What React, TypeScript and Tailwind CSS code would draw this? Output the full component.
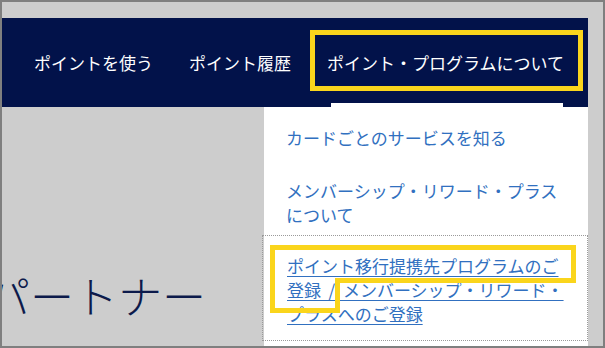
export default function App() {
  return (
    <div className="relative w-[605px] h-[348px] overflow-hidden font-['Noto_Sans_CJK_JP','Noto_Sans',sans-serif]">
      <div className="relative w-full h-full border-2 border-[#7f7f7f] bg-[#cdcdcd] overflow-hidden">
        <div className="pt-[16px] pr-[15px]">
          <nav className="h-[89px] bg-[#02124a] flex items-center pl-[32px] gap-[36px] text-[17px] leading-[24px] text-white">
            <span>ポイントを使う</span>
            <span>ポイント履歴</span>
            <span className="relative h-full flex items-center">
              ポイント・プログラムについて
              <span className="absolute left-[4px] right-[1px] bottom-0 h-[4px] bg-white" />
            </span>
          </nav>
        </div>
        <h1 className="mt-[166px] -ml-[16px] text-[44px] leading-[44px] font-light text-[#0c1a4b] whitespace-nowrap">
          パートナー
        </h1>
        <div className="absolute left-[262px] top-[105px] w-[324px] bottom-0 bg-white pt-[19px] text-[17px] leading-[24px] text-[#3170c0]">
          <div className="pl-[22px]">カードごとのサービスを知る</div>
          <div className="pl-[22px] mt-[29px]">
            メンバーシップ・リワード・プラス
            <br />
            について
          </div>
          <div className="-ml-[2px] mt-[8px] pl-[24px] pt-[18px] pb-[14px] border border-dotted border-[#9a9a9a]">
            <span className="underline underline-offset-[3px] decoration-1 whitespace-pre">
              {"ポイント移行提携先プログラムのご"}
              <br />
              {"登録  /  メンバーシップ・リワード・"}
              <br />
              {"プラスへのご登録"}
            </span>
          </div>
        </div>
      </div>
      <svg
        className="absolute left-0 top-0 pointer-events-none"
        width="605"
        height="348"
        viewBox="0 0 605 348"
      >
        <rect x="312.5" y="32.5" width="268" height="56" fill="none" stroke="#fad51c" strokeWidth="5" />
        <path
          d="M272.5 247.5 H573.5 V280.5 H337.5 V310.5 H272.5 Z"
          fill="none"
          stroke="#fad51c"
          strokeWidth="5"
          strokeLinejoin="miter"
        />
      </svg>
    </div>
  );
}
